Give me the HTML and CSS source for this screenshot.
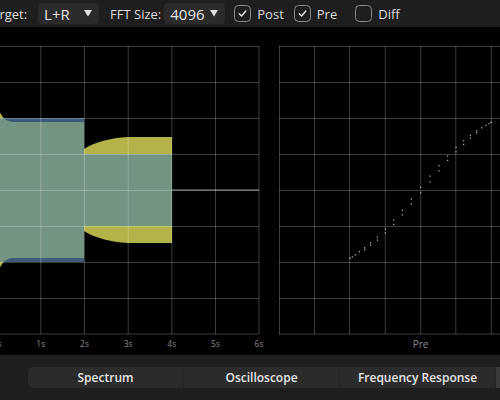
FILE: index.html
```html
<!DOCTYPE html>
<html>
<head>
<meta charset="utf-8">
<link rel="stylesheet" href="styles.css">
</head>
<body>
<div class="app">
  <div class="topbar">
    <span class="label cut">Target:</span>
    <div class="dropdown dd-target"><span>L+R</span><svg class="arrow" width="8" height="7" viewBox="0 0 8 7"><polygon points="0,0 8,0 4,6.5" fill="#e2e2e2"/></svg></div>
    <span class="label fft">FFT Size:</span>
    <div class="dropdown dd-fft"><span>4096</span><svg class="arrow" width="8" height="7" viewBox="0 0 8 7"><polygon points="0,0 8,0 4,6.5" fill="#e2e2e2"/></svg></div>
    <label class="check c-post"><span class="box"><svg width="15" height="15" viewBox="0 0 15 15"><path d="M4.3 7.8 L6.6 10 L10.8 5" fill="none" stroke="#e6e6e6" stroke-width="1.4" stroke-linecap="round" stroke-linejoin="round"/></svg></span><span class="label">Post</span></label>
    <label class="check c-pre"><span class="box"><svg width="15" height="15" viewBox="0 0 15 15"><path d="M4.3 7.8 L6.6 10 L10.8 5" fill="none" stroke="#e6e6e6" stroke-width="1.4" stroke-linecap="round" stroke-linejoin="round"/></svg></span><span class="label">Pre</span></label>
    <label class="check c-diff"><span class="box"></span><span class="label">Diff</span></label>
  </div>

  <div class="plots">
    <svg class="plot-left" width="270" height="328" viewBox="0 27 270 328">
      <defs>
        <clipPath id="postclip">
          <path d="M0,118 L84,118 L84,154 L172,154 L172,226 L84,226 L84,262 L0,262 Z"/>
        </clipPath>
      </defs>
      <path class="pre" d="M0,112.5 C3,118 6,121 12,122 L84,122 L84,149 C95,142 110,138 128,137 L172,137 L172,243 L128,243 C110,242 95,238 84,231 L84,258 L12,258 C6,259 3,262 0,267.5 Z"/>
      <path class="post" d="M0,118 L84,118 L84,154 L172,154 L172,226 L84,226 L84,262 L0,262 Z"/>
      <path class="both" clip-path="url(#postclip)" d="M0,112.5 C3,118 6,121 12,122 L84,122 L84,149 C95,142 110,138 128,137 L172,137 L172,243 L128,243 C110,242 95,238 84,231 L84,258 L12,258 C6,259 3,262 0,267.5 Z"/>
      <line class="flat" x1="172" y1="190" x2="259" y2="190"/>
      <g class="grid">
        <line x1="0" y1="46.5" x2="259" y2="46.5"/>
        <line x1="0" y1="82.5" x2="259" y2="82.5"/>
        <line x1="0" y1="118.5" x2="259" y2="118.5"/>
        <line x1="0" y1="154.5" x2="259" y2="154.5"/>
        <line x1="0" y1="190.5" x2="259" y2="190.5"/>
        <line x1="0" y1="226.5" x2="259" y2="226.5"/>
        <line x1="0" y1="262.5" x2="259" y2="262.5"/>
        <line x1="0" y1="298.5" x2="259" y2="298.5"/>
        <line x1="0" y1="334" x2="259" y2="334"/>
        <line x1="40.8" y1="46" x2="40.8" y2="334"/>
        <line x1="84.5" y1="46" x2="84.5" y2="334"/>
        <line x1="128.2" y1="46" x2="128.2" y2="334"/>
        <line x1="171.8" y1="46" x2="171.8" y2="334"/>
        <line x1="215.5" y1="46" x2="215.5" y2="334"/>
        <line x1="259" y1="46" x2="259" y2="334"/>
      </g>
      <g class="axis">
        <text x="-3" y="347">0s</text>
        <text x="40.8" y="347">1s</text>
        <text x="84.5" y="347">2s</text>
        <text x="128.2" y="347">3s</text>
        <text x="171.8" y="347">4s</text>
        <text x="215.5" y="347">5s</text>
        <text x="259" y="347">6s</text>
      </g>
    </svg>
    <svg class="plot-right" width="230" height="328" viewBox="270 27 230 328">
      <g class="grid">
        <line x1="279" y1="46.5" x2="500" y2="46.5"/>
        <line x1="279" y1="82.5" x2="500" y2="82.5"/>
        <line x1="279" y1="118.5" x2="500" y2="118.5"/>
        <line x1="279" y1="154.5" x2="500" y2="154.5"/>
        <line x1="279" y1="190.5" x2="500" y2="190.5"/>
        <line x1="279" y1="226.5" x2="500" y2="226.5"/>
        <line x1="279" y1="262.5" x2="500" y2="262.5"/>
        <line x1="279" y1="298.5" x2="500" y2="298.5"/>
        <line x1="279" y1="334" x2="500" y2="334"/>
        <line x1="279.5" y1="46" x2="279.5" y2="334"/>
        <line x1="314.5" y1="46" x2="314.5" y2="334"/>
        <line x1="349.5" y1="46" x2="349.5" y2="334"/>
        <line x1="385.3" y1="46" x2="385.3" y2="334"/>
        <line x1="420.7" y1="46" x2="420.7" y2="334"/>
        <line x1="455.8" y1="46" x2="455.8" y2="334"/>
        <line x1="491.3" y1="46" x2="491.3" y2="334"/>
      </g>
      <g class="dots">
        <rect x="420.2" y="186.8" width="1" height="1.2"/><rect x="420.2" y="192.2" width="1" height="1.2"/>
        <rect x="429.5" y="175.5" width="1" height="1.2"/><rect x="429.5" y="181.2" width="1" height="1.2"/>
        <rect x="438.5" y="165.2" width="1" height="1.2"/><rect x="438.5" y="170.2" width="1" height="1.2"/>
        <rect x="447.2" y="155.5" width="1" height="1.2"/><rect x="447.2" y="159.8" width="1" height="1.2"/>
        <rect x="455.5" y="146.8" width="1" height="1.2"/><rect x="455.5" y="151.2" width="1" height="1.2"/>
        <rect x="463.2" y="140.2" width="1" height="1.2"/><rect x="463.2" y="143.8" width="1" height="1.2"/>
        <rect x="469.8" y="134.8" width="1" height="1.2"/><rect x="469.8" y="137.5" width="1" height="1.2"/>
        <rect x="476.2" y="130.2" width="1" height="1.2"/><rect x="476.2" y="132.2" width="1" height="1.2"/>
        <rect x="481.2" y="127.2" width="1" height="1.2"/>
        <rect x="485.5" y="124.8" width="1" height="1.2"/>
        <rect x="488.5" y="123.2" width="1" height="1.2"/>
        <rect x="490.5" y="121.8" width="1.2" height="1.2"/>
        <rect x="410.8" y="198.5" width="1" height="1.2"/><rect x="410.8" y="203.5" width="1" height="1.2"/>
        <rect x="401.8" y="209.5" width="1" height="1.2"/><rect x="401.8" y="214.2" width="1" height="1.2"/>
        <rect x="393.2" y="219.5" width="1" height="1.2"/><rect x="393.2" y="223.8" width="1" height="1.2"/>
        <rect x="384.8" y="228.5" width="1" height="1.2"/><rect x="384.8" y="232.2" width="1" height="1.2"/>
        <rect x="376.8" y="236.5" width="1" height="1.2"/><rect x="376.8" y="239.5" width="1" height="1.2"/>
        <rect x="370.2" y="242.2" width="1" height="1.2"/><rect x="370.2" y="244.5" width="1" height="1.2"/>
        <rect x="364.2" y="247.2" width="1" height="1.2"/><rect x="364.2" y="249.2" width="1" height="1.2"/>
        <rect x="358.8" y="251.2" width="1" height="1.2"/>
        <rect x="354.8" y="254.2" width="1" height="1.2"/>
        <rect x="351.8" y="256.2" width="1" height="1.2"/>
        <rect x="349.5" y="257.5" width="1.2" height="1.2"/>
      </g>
      <text class="axis-title" x="420.5" y="348">Pre</text>
    </svg>
  </div>

  <div class="bottombar">
    <div class="segmented">
      <div class="seg">Spectrum</div>
      <div class="seg">Oscilloscope</div>
      <div class="seg">Frequency Response</div>
      <div class="seg seg-next"></div>
    </div>
  </div>
</div>
</body>
</html>
```
FILE: styles.css
```css
html, body {
  margin: 0;
  padding: 0;
  background: #000;
  width: 500px;
  height: 400px;
  overflow: hidden;
  font-family: "Open Sans", "Noto Sans", "Liberation Sans", sans-serif;
}

.app {
  width: 500px;
  height: 400px;
  display: flex;
  flex-direction: column;
  overflow: hidden;
}

.topbar {
  height: 27px;
  flex: none;
  background: #1e1e1e;
  display: flex;
  align-items: center;
  white-space: nowrap;
  font-size: 13px;
  color: #dcdcdc;
}

.label {
  color: #dcdcdc;
}

.cut {
  margin-left: -15px;
}

.dropdown {
  height: 21px;
  box-sizing: border-box;
  background: #2b2b2b;
  border-radius: 4px;
  display: flex;
  align-items: center;
  justify-content: space-between;
  padding: 0 7px 0 6px;
  color: #e4e4e4;
  font-size: 15px;
}

.dropdown .arrow {
  display: block;
}

.dd-target {
  margin-left: 11px;
  width: 61px;
}

.fft {
  margin-left: 11px;
}

.dd-fft {
  margin-left: 3px;
  width: 61px;
}

.check {
  display: flex;
  align-items: center;
}

.box {
  width: 17px;
  height: 17px;
  box-sizing: border-box;
  border: 1.3px solid #8a8a8a;
  border-radius: 4.5px;
  display: flex;
  align-items: center;
  justify-content: center;
}

.box svg {
  display: block;
  flex: none;
}

.check .label {
  margin-left: 6px;
}

.c-post { margin-left: 9px; }
.c-pre { margin-left: 10px; }
.c-diff { margin-left: 18px; }

.plots {
  height: 328px;
  flex: none;
  display: flex;
  background: #000;
}

.plots svg {
  display: block;
  flex: none;
}

.pre { fill: #b4b34a; }
.post { fill: #3d5a78; }
.both { fill: #749482; }

.flat {
  stroke: #7d9c84;
  stroke-width: 1;
}

.grid line {
  stroke: rgba(255, 255, 255, 0.24);
  stroke-width: 1;
}

.axis text {
  font-family: "Open Sans", "Noto Sans", sans-serif;
  font-size: 8.5px;
  fill: #8a8a8a;
  text-anchor: middle;
}

.axis-title {
  font-family: "Open Sans", "Noto Sans", sans-serif;
  font-size: 10px;
  fill: #8c8c8c;
  text-anchor: middle;
}

.dots rect {
  fill: #e8e8e8;
}

.bottombar {
  flex: 1;
  background: #1e1e1e;
  padding: 12px 0 0 28px;
  box-sizing: border-box;
}

.segmented {
  display: flex;
  height: 21px;
  width: 480px;
  background: #2b2b2b;
  border-radius: 5px;
  overflow: hidden;
}

.seg {
  flex: none;
  width: 155px;
  display: flex;
  align-items: center;
  justify-content: center;
  color: #e6e6e6;
  font-size: 12px;
  font-weight: 600;
  border-right: 1px solid #242424;
  white-space: nowrap;
}

.seg-next {
  width: 20px;
  background: #3a3a3a;
  border-right: none;
}
```
